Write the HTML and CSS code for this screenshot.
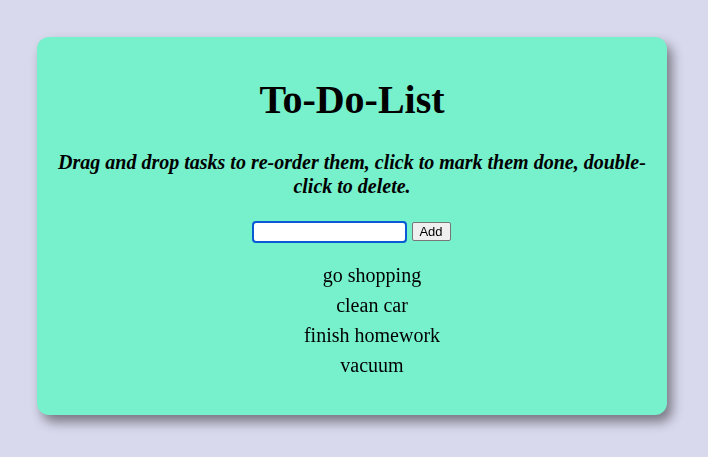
FILE: index.html
```html
<!DOCTYPE html>
<html>
<head>
<meta charset="utf-8">
<link rel="stylesheet" href="styles.css">
</head>
<body>
<div class="page">
  <div class="card">
    <h1 class="title">To-Do-List</h1>
    <p class="hint">Drag and drop tasks to re-order them, click to mark them done, double-click to delete.</p>
    <form class="add-form">
      <input class="task-input" type="text" autofocus>
      <button class="add-btn" type="button">Add</button>
    </form>
    <ul class="tasks">
      <li class="task">go shopping</li>
      <li class="task">clean car</li>
      <li class="task">finish homework</li>
      <li class="task">vacuum</li>
    </ul>
  </div>
</div>
</body>
</html>
```
FILE: styles.css
```css
html, body {
  margin: 0;
  padding: 0;
  background: #d9d9ee;
  font-family: "Liberation Serif", "Times New Roman", serif;
}
.page {
  padding: 37px 41px 42px 37px;
}
.card {
  background: #77f0cc;
  border-radius: 12px;
  box-shadow: 5px 7px 12px rgba(0, 0, 0, 0.45);
  height: 378px;
  box-sizing: border-box;
  padding: 40px 20px 0;
  text-align: center;
}
.title {
  font-size: 40px;
  font-weight: bold;
  margin: 0;
  line-height: 46px;
}
.hint {
  font-size: 20px;
  font-weight: bold;
  font-style: italic;
  line-height: 24px;
  margin: 27px 0 0;
}
.add-form {
  margin: 24px 0 0;
  display: flex;
  justify-content: center;
  align-items: center;
  gap: 5px;
}
.task-input {
  width: 151px;
  height: 18px;
  box-sizing: border-box;
  border: 1px solid #767676;
  border-radius: 2px;
  font-family: "Liberation Sans", Arial, sans-serif;
  font-size: 13px;
  margin: 0;
  background: #fff;
}
.task-input:focus {
  outline: 2px solid #0a5ad6;
  outline-offset: 0;
  border-color: #fff;
}
.add-btn {
  font-family: "Liberation Sans", Arial, sans-serif;
  font-size: 13px;
  margin: 0 0 0 2px;
  height: 19px;
  width: 39px;
  padding: 0;
  background: #efefef;
  border: 1px solid #767676;
  border-radius: 2px;
}
.tasks {
  list-style: none;
  margin: 19px 0 0;
  padding: 0 0 0 40px;
}
.task {
  font-size: 20px;
  line-height: 30px;
}
```
